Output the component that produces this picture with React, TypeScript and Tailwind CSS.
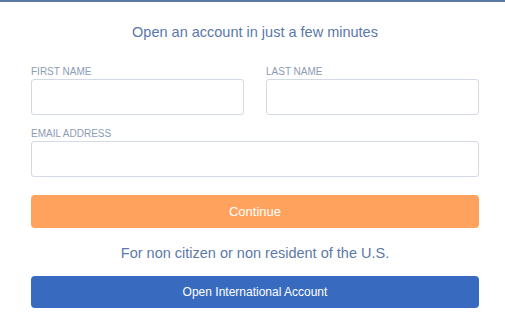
const Field = ({ label }: { label: string }) => (
  <div className="flex flex-col">
    <label className="block mb-[1px] text-[10px] leading-[12px] text-[#8d9bb5] uppercase">
      {label}
    </label>
    <input
      type="text"
      className="w-full h-[36px] rounded-[3px] border border-[#d4dae3] bg-white outline-none px-2"
    />
  </div>
);

const App = () => {
  return (
    <div className="w-[505px] h-[317px] bg-white border-t-2 border-[#5c79a9] font-['Liberation_Sans',Arial,sans-serif] overflow-hidden">
      <div className="ml-[31px] w-[448px] pt-[20px]">
        <h1 className="text-center text-[14.5px] leading-[20px] text-[#5a78aa]">
          Open an account in just a few minutes
        </h1>
        <div className="mt-[24px] grid grid-cols-2 gap-x-[22px]">
          <Field label="First Name" />
          <Field label="Last Name" />
        </div>
        <div className="mt-[13px]">
          <Field label="Email Address" />
        </div>
        <button
          type="button"
          className="mt-[18px] w-full h-[33px] rounded-[4px] bg-[#ffa25d] text-white text-[13px]"
        >
          Continue
        </button>
        <p className="mt-[15px] text-center text-[14.5px] leading-[20px] text-[#5d79a8]">
          For non citizen or non resident of the U.S.
        </p>
        <button
          type="button"
          className="mt-[13px] w-full h-[32px] rounded-[4px] bg-[#386bbf] text-white text-[12px]"
        >
          Open International Account
        </button>
      </div>
    </div>
  );
};

export default App;
